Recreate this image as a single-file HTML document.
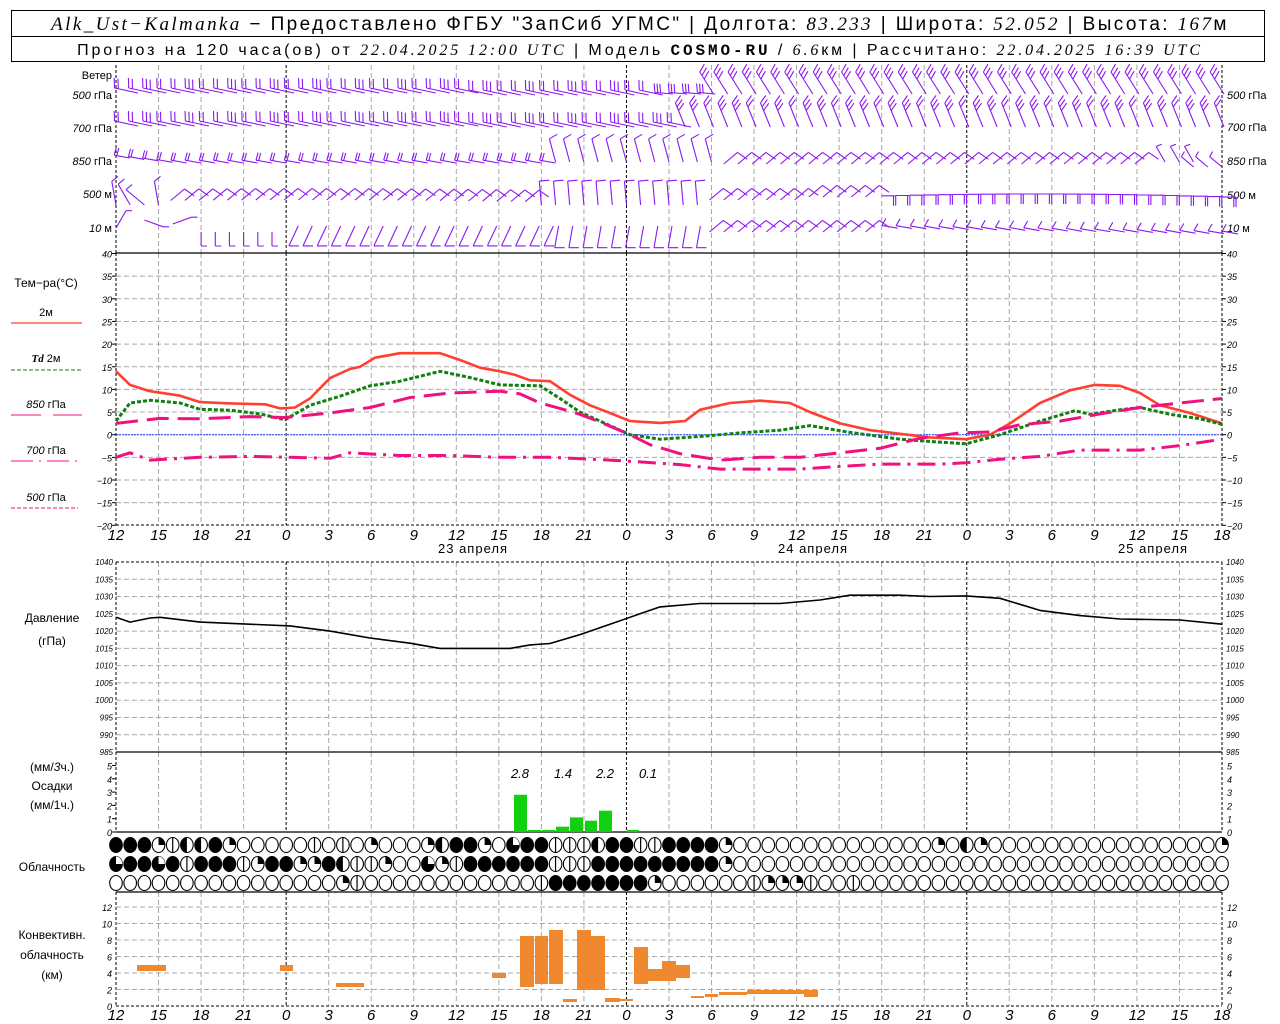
<!DOCTYPE html>
<html><head><meta charset="utf-8"><style>
html,body{margin:0;padding:0;background:#fff;width:1280px;height:1024px;overflow:hidden}
svg{display:block}
text{font-family:"Liberation Sans","DejaVu Sans",sans-serif;fill:#000}
.it{font-style:italic}
.sr{font-family:"Liberation Serif",serif;font-style:italic}
</style></head><body>
<svg id="s" width="1280" height="1024" viewBox="0 0 1280 1024" xmlns="http://www.w3.org/2000/svg">
<rect x="11.5" y="10.5" width="1253" height="51" fill="none" stroke="#000"/>
<line x1="11" y1="36.5" x2="1264" y2="36.5" stroke="#000"/>
<text x="640" y="30" font-size="19" text-anchor="middle" letter-spacing="2.4"><tspan class="sr">Alk_Ust−Kalmanka</tspan> − Предоставлено ФГБУ "ЗапСиб УГМС" | Долгота: <tspan class="sr">83.233</tspan> | Широта: <tspan class="sr">52.052</tspan> | Высота: <tspan class="sr">167</tspan>м</text>
<text x="640" y="55" font-size="16" text-anchor="middle" letter-spacing="2.9">Прогноз на 120 часа(ов) от <tspan class="sr">22.04.2025 12:00 UTC</tspan>  | Модель <tspan font-family="Liberation Mono" font-weight="bold">COSMO-RU</tspan> / <tspan class="sr">6.6</tspan>км | Рассчитано: <tspan class="sr">22.04.2025 16:39 UTC</tspan></text>

<g font-size="11" text-anchor="end">
<text x="112" y="79">Ветер</text>
<text x="112" y="99"><tspan class="it">500</tspan> гПа</text>
<text x="112" y="132"><tspan class="it">700</tspan> гПа</text>
<text x="112" y="165"><tspan class="it">850</tspan> гПа</text>
<text x="112" y="198"><tspan class="it">500</tspan>  м</text>
<text x="112" y="232"><tspan class="it">10</tspan>   м</text>
</g>
<g font-size="11" text-anchor="start">
<text x="1227" y="99"><tspan class="it">500</tspan> гПа</text>
<text x="1227" y="131"><tspan class="it">700</tspan> гПа</text>
<text x="1227" y="165"><tspan class="it">850</tspan> гПа</text>
<text x="1227" y="199"><tspan class="it">500</tspan>  м</text>
<text x="1227" y="232"><tspan class="it">10</tspan>   м</text>
</g>
<g font-size="12" text-anchor="middle">
<text x="46" y="287">Тем−ра(°С)</text>
<text x="46" y="316" font-size="11">2м</text>
<text x="46" y="362" font-size="11"><tspan class="sr" font-weight="bold">Td</tspan>  2м</text>
<text x="46" y="408" font-size="11"><tspan class="it">850</tspan> гПа</text>
<text x="46" y="454" font-size="11"><tspan class="it">700</tspan> гПа</text>
<text x="46" y="501" font-size="11"><tspan class="it">500</tspan> гПа</text>
<text x="52" y="622">Давление</text>
<text x="52" y="645">(гПа)</text>
<text x="52" y="771">(мм/<tspan class="it">3</tspan>ч.)</text>
<text x="52" y="790">Осадки</text>
<text x="52" y="809">(мм/1ч.)</text>
<text x="52" y="871">Облачность</text>
<text x="52" y="939">Конвективн.</text>
<text x="52" y="959">облачность</text>
<text x="52" y="979">(км)</text>
</g>
<line x1="11" y1="323" x2="82" y2="323" stroke="#ff4030" stroke-width="1.2"/>
<line x1="11" y1="370" x2="82" y2="370" stroke="#108010" stroke-width="1" stroke-dasharray="4,2"/>
<line x1="11" y1="415" x2="82" y2="415" stroke="#f01080" stroke-width="1" stroke-dasharray="30,12"/>
<line x1="11" y1="461" x2="82" y2="461" stroke="#f01080" stroke-width="1" stroke-dasharray="22,6,2,6"/>
<line x1="11" y1="508" x2="78" y2="508" stroke="#f01080" stroke-width="1" stroke-dasharray="4,2"/>
<g font-size="13" text-anchor="middle">
<text x="473" y="553" letter-spacing="1">23 апреля</text>
<text x="813" y="553" letter-spacing="1">24 апреля</text>
<text x="1153" y="553" letter-spacing="1">25 апреля</text>
<text x="520" y="778" font-style="italic">2.8</text><text x="563" y="778" font-style="italic">1.4</text><text x="605" y="778" font-style="italic">2.2</text><text x="648" y="778" font-style="italic">0.1</text>
</g>
<g id="g"></g>
</svg>
<script>
var s=document.getElementById('g'),h='';
var X0=116,X1=1222,P=(X1-X0)/78;
function L(x1,y1,x2,y2,st){h+='<line x1="'+x1+'" y1="'+y1+'" x2="'+x2+'" y2="'+y2+'" '+st+'/>';}
function T(x,y,t,a,sz,st){h+='<text x="'+x+'" y="'+y+'" font-size="'+(sz||9)+'" font-style="italic" text-anchor="'+(a||'start')+'" '+(st||'')+'>'+t+'</text>';}
var gr='stroke="#a8a8a8" stroke-width="1" stroke-dasharray="5,3"',bk='stroke="#000" stroke-width="1" stroke-dasharray="3,2"',sol='stroke="#000" stroke-width="1.3"';
var panels=[[65,253],[253,525],[562,752],[752,832],[892,1006]];
for(var k=0;k<=26;k++){var x=X0+k*3*P;var mid=((12+3*k)%24==0);
 panels.forEach(function(p){L(x,p[0],x,p[1],(mid||k==0||k==26)?bk:gr);});}
for(var t=-20;t<=40;t+=5){var y=434.7-4.53*t;if(t>-20&&t<40)L(X0,y,X1,y,gr);
 T(112,y+4,(t<0?'−'+(-t):t),'end');T(1227,y+4,(t<0?'−'+(-t):t));L(112,y,116,y,'stroke="#000"');L(1222,y,1226,y,'stroke="#000"');}
L(X0,253,X1,253,sol);L(X0,525,X1,525,bk);L(X0,434.7,X1,434.7,'stroke="#2040ff" stroke-width="1" stroke-dasharray="2,1"');
for(var p=985;p<=1040;p+=5){var y=562+(1040-p)*3.455;if(p>985&&p<1040)L(X0,y,X1,y,gr);T(113,y+3,p,'end',8);T(1226,y+3,p,'start',8);}
L(X0,562,X1,562,bk);L(X0,752,X1,752,sol);
for(var m=0;m<=5;m++){var y=832-m*13.3;T(112,y+4,m,'end');T(1227,y+4,m);L(112,y,116,y,'stroke="#000"');}
L(X0,832,X1,832,sol);
for(var c=0;c<=12;c+=2){var y=1006-c*8.25;if(c>0)L(X0,y,X1,y,gr);T(112,y+4,c,'end');T(1227,y+4,c);}
L(X0,892,X1,892,sol);L(X0,1006,X1,1006,bk);
for(var k=0;k<=26;k++){var x=X0+k*3*P,hr=(12+3*k)%24;T(x,540,hr,'middle',15);T(x,1020,hr,'middle',15);}
function pl(pts,fy,st){var d=pts.map(function(q){return q[0]+','+fy(q[1]).toFixed(1)}).join(' ');h+='<polyline fill="none" stroke-linejoin="round" points="'+d+'" '+st+'/>';}
var ty=function(t){return 434.7-4.53*t},py=function(p){return 562+(1040-p)*3.455};
pl([[116,14],[130,11],[150,9.6],[180,8.6],[200,7.2],[230,6.9],[265,6.7],[280,5.8],[295,6],[310,8],[330,12.5],[350,14.5],[360,15],[375,17],[400,18],[440,18],[460,16.5],[480,14.8],[500,14],[515,13.2],[530,12],[550,11.8],[570,8.8],[590,6.5],[610,4.8],[630,3],[660,2.6],[685,3],[700,5.5],[730,7],[760,7.5],[790,7],[810,5],[840,2.5],[870,1],[900,0.2],[930,-0.6],[966,-1],[990,0],[1010,2.5],[1040,7],[1070,9.8],[1095,11],[1120,10.8],[1140,9.2],[1160,6.5],[1190,4.8],[1222,2.5]],ty,'stroke="#ff4030" stroke-width="2.6"');
pl([[116,3],[130,7],[150,7.6],[180,7],[200,5.6],[230,5.4],[260,4.6],[285,3.3],[310,6.5],[340,8.5],[370,10.8],[400,11.8],[440,14],[470,12.6],[500,11],[540,10.8],[560,8],[580,5],[600,3],[630,0],[660,-1],[700,-0.4],[740,0.4],[780,1],[810,2],[850,0.5],[900,-1],[930,-1.5],[966,-2],[1000,0],[1040,3],[1075,5.3],[1090,4.5],[1120,5.5],[1140,6],[1170,4.5],[1200,3.5],[1222,2.3]],ty,'stroke="#108010" stroke-width="3" stroke-dasharray="4,2"');
pl([[116,2.5],[160,3.6],[200,3.5],[250,4],[285,3.8],[330,4.8],[370,6],[410,8.2],[450,9.2],[500,9.6],[520,9],[540,7],[560,5.8],[580,4.5],[600,2.8],[630,0],[650,-2.2],[680,-4.2],[720,-5.6],[760,-5],[800,-5],[840,-4],[880,-3],[920,-0.8],[960,0.4],[990,0.6],[1020,2.2],[1060,3],[1100,4.6],[1140,6],[1180,7],[1222,8]],ty,'stroke="#f01080" stroke-width="3" stroke-dasharray="22,9"');
pl([[116,-5],[130,-4],[150,-5.6],[200,-5],[250,-4.8],[290,-5],[330,-5.2],[350,-4],[400,-4.6],[450,-4.6],[500,-5],[550,-5],[600,-5.5],[640,-6],[680,-6.6],[720,-7.6],[800,-7.6],[840,-7],[880,-6.5],[940,-6.5],[966,-6.2],[1000,-5.4],[1040,-4.8],[1080,-3.4],[1140,-3.4],[1180,-2.4],[1222,-1]],ty,'stroke="#f01080" stroke-width="3" stroke-dasharray="18,7,3,7"');
pl([[116,1024],[130,1022.6],[150,1023.8],[160,1024],[200,1022.6],[290,1021.5],[330,1020],[370,1018],[410,1016.5],[440,1015],[480,1015],[510,1015],[530,1016],[550,1016.4],[580,1019],[610,1022],[640,1025],[660,1027],[700,1028],[780,1028],[820,1029],[850,1030.4],[900,1030.4],[930,1030],[966,1030.2],[1000,1029.5],[1040,1026],[1080,1024.5],[1120,1023.5],[1180,1023.2],[1222,1022]],py,'stroke="#000" stroke-width="1.6"');
[[514,527,2.8],[528,541,0.15],[542,555,0.15],[556,569,0.4],[570,583,1.1],[585,597,0.85],[599,612,1.6],[627,639,0.15]].forEach(function(b){var hh=b[2]*13.3;h+='<rect x="'+b[0]+'" y="'+(832-hh)+'" width="'+(b[1]-b[0])+'" height="'+hh+'" fill="#10d010"/>';});
[[137,166,965,971],[280,293,965,971],[336,364,983,987],[492,506,973,978],[520,534,936,987],[535,548,936,984],[549,563,930,984],[563,577,999,1002],[577,591,930,990],[591,605,936,990],[605,620,998,1002],[620,633,999,1001],[634,648,947,984],[648,662,969,981],[662,676,961,981],[676,690,965,978],[691,704,996,998],[705,718,994,997],[719,747,992,995],[747,804,990,994],[804,818,990,997]].forEach(function(b){h+='<rect x="'+b[0]+'" y="'+b[2]+'" width="'+(b[1]-b[0])+'" height="'+(b[3]-b[2])+'" fill="#f08830"/>';});
var rows=[[845,"fffqhllfqooooohohoqoooqlffqovffhhhlffhhffffq"+"oooooooooooooo"+"qolq"+"oooooooooooooooo"+"q"],
[864,"vffvfhfffhqffqqflhhqoovqhffffffhhhfffffffffq"+"ooooooooooooooooooooooooooooooooooo"],
[883,"oooooooooooooooo"+"qh"+"oooooooooooo"+"h"+"fffffff"+"q"+"oooooo"+"hqqqh"+"oo"+"h"+"oooooooooooooooooooooooooo"]];
rows.forEach(function(r){var y=r[0];for(var i=0;i<79;i++){var x=X0+i*P,c=r[1][i]||'o';
 var fill=(c=='f'||c=='v')?'#000':'#fff';
 h+='<ellipse cx="'+x.toFixed(1)+'" cy="'+y+'" rx="6.3" ry="7.5" fill="'+fill+'" stroke="#000" stroke-width="1.1"/>';
 if(c=='h')L(x,y-7.5,x,y+7.5,'stroke="#000" stroke-width="1.2"');
 if(c=='l')h+='<path d="M'+x+' '+(y-7.5)+'A6.3 7.5 0 0 0 '+x+' '+(y+7.5)+'Z" fill="#000"/>';
 if(c=='q')h+='<path d="M'+x+' '+y+'L'+x+' '+(y-7.5)+'A6.3 7.5 0 0 1 '+(x+6.3)+' '+y+'Z" fill="#000"/>';
 if(c=='v')h+='<path d="M'+x+' '+y+'L'+x+' '+(y-7.5)+'A6.3 7.5 0 0 1 '+(x+6.3)+' '+y+'Z" fill="#fff"/>';
}});
var W='stroke="#8a18f0" stroke-width="1.1" fill="none"';
function barb(x,y,a,len,ta,tl,n){var r=Math.PI/180,ex=x+len*Math.cos(a*r),ey=y+len*Math.sin(a*r),d='M'+x.toFixed(1)+' '+y.toFixed(1)+'L'+ex.toFixed(1)+' '+ey.toFixed(1);
 for(var j=0;j<n;j++){var f=1-j*0.16,bx=x+len*f*Math.cos(a*r),by=y+len*f*Math.sin(a*r);d+='M'+bx.toFixed(1)+' '+by.toFixed(1)+'l'+(tl*Math.cos(ta*r)).toFixed(1)+' '+(tl*Math.sin(ta*r)).toFixed(1);}
 h+='<path d="'+d+'" '+W+'/>';}
for(var i=0;i<79;i++){var x=X0+i*P,j=(i*7)%3;
 if(x<650){barb(x+22,93-(x>470?-2:0),-168,24,-92,10,2+(j==2?1:0));} else if(x<700){barb(x+18,94,-175,18,-95,9,3);} else {barb(x+2,94,-122,26,-60,9,3);}
 if(x<670){barb(x+22,126+(x>470?1:0),-168,24,-92,10,2+(j==2?1:0));} else {barb(x+2,127,-112,26,-55,9,2+(j>0?1:0));}
 var y85=163-Math.max(0,5-Math.abs(x-116)/10);
 if(x<545){barb(x+14,y85,-170,16,-75,8,2);} else if(x<725){barb(x,162,-105,24,-30,9,1);} else if(x<1150){barb(x-2,164,-40,18,35,12,1);} else if(x<1190){barb(x+14,162,-120,18,-20,6,1);} else {barb(x,167,-140,16,-60,6,1);}
 if(x<170){barb(x,205,-100-j*20,24,-40,8,1);} else if(x<540){barb(x-2,200+(x-300)*(x-300)/30000,-40,18,35,12,1);} else if(x<700){barb(x,205,-95,24,-5,10,1);} else if(x<870){barb(x-2,200-(x>800?3:0),-40,18,35,12,1);} else {barb(x,194+(x-1030)*(x-1030)/12000,0,14,90,10,2);}
 if(x<200){if(i%2==0)barb(x,228-j*4,-60+j*40,20,0,6,1);} else if(x<280){barb(x,232,90,14,0,6,1);} else if(x<545){barb(x+12,226,115,22,0,10,1);} else if(x<700){barb(x+3,226,100,22,0,10,1);} else if(x<870){barb(x-2,232,-40,18,35,12,1);} else {barb(x+16,228+(x-870)/60,-170,16,-60,8,1);}
}
s.innerHTML=h;
</script>
</body></html>
